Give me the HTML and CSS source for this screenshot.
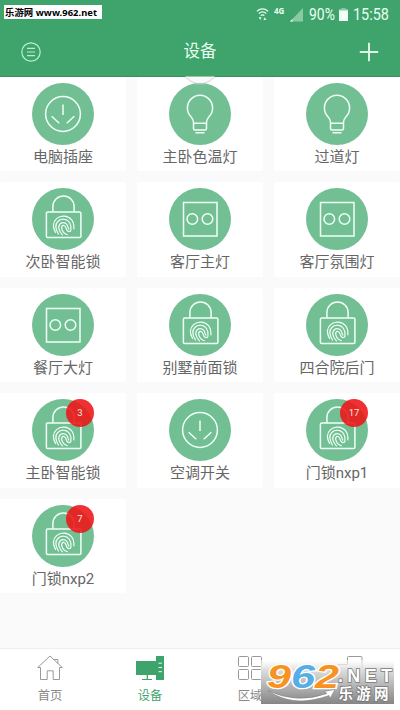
FILE: index.html
```html
<!DOCTYPE html>
<html lang="zh-CN">
<head>
<meta charset="utf-8">
<title>设备</title>
<link rel="stylesheet" href="styles.css">
</head>
<body>
<svg class="defs" aria-hidden="true">
  <symbol id="socket" viewBox="0 0 62 62">
    <circle cx="31" cy="31" r="17.4"/>
    <path d="M31 21.5v10.5M19.7 33.3l7.6 7M42.3 33.3l-7.6 7"/>
  </symbol>
  <symbol id="bulb" viewBox="0 0 62 62">
    <path d="M24.5 45.5v-6.200c0-2.400-1-3.900-2.700-5.800a12.600 12.600 0 1 1 18.400 0c-1.700 1.900-2.700 3.400-2.700 5.800v6.200a1.500 1.500 0 0 1-1.500 1.500h-10a1.500 1.500 0 0 1-1.500-1.500zM24.500 40.200h13M26.500 49.800h9"/>
  </symbol>
  <symbol id="switch" viewBox="0 0 62 62">
    <path d="M14.500 14.500h33.500v33.500h-33.500z"/>
    <circle cx="23.300" cy="31" r="5.300"/><circle cx="38.500" cy="31" r="5.300"/>
  </symbol>
  <symbol id="lock" viewBox="0 0 62 62">
    <rect x="14.400" y="24" width="34.500" height="25.500" rx="1.300"/>
    <path d="M20.900 24v-5.500a10.600 10.600 0 0 1 21.200 0v5.500"/>
    <path class="print" d="M23.600 44.500c-2.800-5-2.700-10.500 1-13.900 4.200-3.800 11.300-3.300 14.900 1.100 2.300 2.900 2.600 6 2.400 9.200M26.400 46c-2.500-4.300-3.400-9.600-.6-12.500 3.200-3.500 9.200-2.900 11.700 1 1.600 2.600 2 5.200 1.400 7.800-.4 1.500-2.300 1.600-3.500.5-1.800-1.600-.9-4.800-3.400-5.300-2-.3-2.700 1.400-2.200 3.400.7 2.900 2.600 4.900 5.500 5.800M30.400 46.900c-2.600-3-4.500-7.500-2.900-10.300 1.700-2.700 6-2.500 7.600.2 1 1.700.8 3.400 1.700 4.200"/>
  </symbol>
</svg>

<header class="header">
  <div class="statusbar">
    <span class="source">乐游网 www.962.net</span>
    <svg class="wifi" viewBox="0 0 14 15">
      <path d="M1 4.500q6-5 12 0M3 7q4-3.400 8 0M5 9.200q2-1.600 4 0"/>
      <path class="solid" d="M3 11h3l-1.500 3zM8 14h3l-1.500-3z"/>
    </svg>
    <span class="network">4G</span>
    <svg class="signal" viewBox="0 0 13 14"><path class="faint" d="M13 0v13.500H0z"/><path class="solid" d="M2.500 11v2.500H0z"/></svg>
    <span class="level">90%</span>
    <svg class="battery" viewBox="0 0 9 13"><path class="faint" d="M2.500 0h4v1H9v2H0V1h2.500z"/><path class="solid" d="M0 2.500h9V13H0z"/></svg>
    <span class="clock">15:58</span>
  </div>
  <div class="titlebar">
    <svg class="menu" viewBox="0 0 20 20"><circle cx="10" cy="10" r="9.200"/><path d="M6 6.300h8M6 10h8M6 13.700h8"/></svg>
    <h1>设备</h1>
    <svg class="add" viewBox="0 0 20 20"><path d="M10 .8v18.400M.8 10h18.400"/></svg>
  </div>
</header>

<main class="grid">
  <div class="card"><div class="disc"><svg><use href="#socket"/></svg></div><span>电脑插座</span></div>
  <div class="card spinner"><div class="disc"><svg><use href="#bulb"/></svg></div><span>主卧色温灯</span></div>
  <div class="card"><div class="disc"><svg><use href="#bulb"/></svg></div><span>过道灯</span></div>
  <div class="card"><div class="disc"><svg><use href="#lock"/></svg></div><span>次卧智能锁</span></div>
  <div class="card"><div class="disc"><svg><use href="#switch"/></svg></div><span>客厅主灯</span></div>
  <div class="card"><div class="disc"><svg><use href="#switch"/></svg></div><span>客厅氛围灯</span></div>
  <div class="card"><div class="disc"><svg><use href="#switch"/></svg></div><span>餐厅大灯</span></div>
  <div class="card"><div class="disc"><svg><use href="#lock"/></svg></div><span>别墅前面锁</span></div>
  <div class="card"><div class="disc"><svg><use href="#lock"/></svg></div><span>四合院后门</span></div>
  <div class="card"><div class="disc"><svg><use href="#lock"/></svg><b class="badge">3</b></div><span>主卧智能锁</span></div>
  <div class="card"><div class="disc"><svg><use href="#socket"/></svg></div><span>空调开关</span></div>
  <div class="card"><div class="disc"><svg><use href="#lock"/></svg><b class="badge">17</b></div><span>门锁nxp1</span></div>
  <div class="card"><div class="disc"><svg><use href="#lock"/></svg><b class="badge">7</b></div><span>门锁nxp2</span></div>
</main>

<nav class="tabs">
  <div class="tab"><svg viewBox="0 0 28 26"><path d="M4.500 12.500H1.700L14 1l12.300 11.500h-2.800v12h-6.300v-8.700h-6v8.700H4.500zM18 4.500h3.800v4"/></svg><span>首页</span></div>
  <div class="tab active"><svg viewBox="0 0 28 26"><path class="solid" d="M0 6h20V1h8v24h-8v-5h-8v4h4v1H6v-1h4.700v-4H0z"/><path class="slots" d="M22.500 8.200h3.500M22.500 12.500h3.500M22.500 16.700h3.500"/></svg><span>设备</span></div>
  <div class="tab"><svg viewBox="0 0 28 26"><rect x="2.500" y="1.500" width="10" height="10" rx="1"/><rect x="15.500" y="1.500" width="10" height="10" rx="1"/><rect x="2.500" y="14.500" width="10" height="10" rx="1"/><rect x="15.500" y="14.500" width="10" height="10" rx="1"/></svg><span>区域</span></div>
  <div class="tab"><svg viewBox="0 0 28 26"><path d="M2 23V9.500h9.500v-7q0-1 1-1h12.500q1 0 1 1V23"/></svg></div>
</nav>

<svg class="watermark" viewBox="0 0 133 44">
  <defs>
    <linearGradient id="shade" x1="0" y1="0" x2="0" y2="1"><stop offset="0" stop-color="#fff" stop-opacity=".5"/><stop offset=".22" stop-color="#dedede"/><stop offset=".6" stop-color="#b3b3b3"/><stop offset="1" stop-color="#858585"/></linearGradient>
  </defs>
  <rect width="133" height="44" fill="url(#shade)"/>
  <g class="digits">
    <text x="6" y="28" textLength="24" lengthAdjust="spacingAndGlyphs" fill="#f7931e">9</text>
    <text x="30" y="28" textLength="24" lengthAdjust="spacingAndGlyphs" fill="#55aee5">6</text>
    <text x="54" y="28" textLength="24" lengthAdjust="spacingAndGlyphs" fill="#f7931e">2</text>
  </g>
  <text class="net" x="77" y="21.500" textLength="54" lengthAdjust="spacing">.NET</text>
  <path d="M7 30.500q28 14 59 3l-3-2 11-2-5 9-1-3q-36 13-61-5z" fill="#fff" stroke="#777" stroke-width=".5"/>
  <text class="name" x="77.500" y="39" textLength="50">乐游网</text>
</svg>
</body>
</html>
```

FILE: styles.css
```css
* { box-sizing: border-box; }

body {
  margin: 0;
  width: 400px;
  height: 710px;
  overflow: hidden;
  position: relative;
  display: flex;
  flex-direction: column;
  background: #fafafa;
  font-family: Roboto, "Noto Sans CJK SC", sans-serif;
}

svg { fill: none; display: block; flex: none; }
.defs { position: absolute; width: 0; height: 0; }

.header {
  height: 76.500px;
  flex: none;
  background: #3fa36c;
  border-bottom: 1px solid #388f60;
  color: #e9fff2;
}

.statusbar {
  height: 29px;
  display: flex;
  align-items: center;
  padding: 0 11px 0 4px;
}
.source {
  width: 98px;
  height: 14px;
  margin: -5px auto 0 0;
  padding-left: 1px;
  background: #fff;
  color: #000;
  font: bold 9.400px/15px "Noto Sans", "Noto Sans CJK SC", sans-serif;
  letter-spacing: .05px;
  white-space: nowrap;
}
.solid { fill: #f2fff7; stroke: none; }
.faint { fill: #8bc9a5; }
.wifi { width: 13px; height: 14px; margin: -2px 5px 0 0; stroke: #e9fff2; stroke-width: 1.300; }
.network { font: bold 8px/10px "Open Sans", sans-serif; margin: -7px 5px 0 0; width: 11px; }
.signal { width: 13px; height: 14px; margin-right: 6px; }
.level, .clock { font-size: 16px; line-height: 29px; white-space: nowrap; transform-origin: left; }
.level { width: 30px; transform: scaleX(.87); }
.battery { width: 9px; height: 13px; }
.clock { width: 36px; margin-left: 5px; transform: scaleX(.9); }

.titlebar {
  height: 46px;
  display: flex;
  align-items: center;
  justify-content: space-between;
  padding: 0 21px;
}
.titlebar h1 { margin: 0; font-size: 16.500px; line-height: 46px; font-weight: 400; }
.menu { width: 20px; height: 20px; stroke: #b9edce; stroke-width: 1.200; }
.add { width: 20px; height: 20px; stroke: #e0f7e9; stroke-width: 1.900; }

.grid {
  height: 571.500px;
  flex: none;
  display: grid;
  grid-template-columns: repeat(3, 126px);
  grid-auto-rows: 94.500px;
  gap: 11px;
  align-content: start;
}
.card {
  position: relative;
  display: flex;
  flex-direction: column;
  align-items: center;
  padding-top: 6px;
  background: #fff;
  border-radius: 2px;
}
.card > span {
  font-size: 15px;
  line-height: 24px;
  color: #666;
}
.disc {
  position: relative;
  width: 62px;
  height: 62px;
  flex: none;
  border-radius: 50%;
  background: #72bf94;
}
.disc svg { width: 62px; height: 62px; stroke: #f0fff6; stroke-width: 1.500; }
.print { stroke-width: 1.200; stroke-linecap: round; }
.badge {
  position: absolute;
  top: 0;
  right: 0;
  width: 28px;
  height: 28px;
  border-radius: 50%;
  background: rgba(238, 22, 26, .89);
  color: #ffe3df;
  font-weight: 400;
  font-size: 9.500px;
  line-height: 28px;
  text-align: center;
}
.spinner::before {
  content: "";
  position: absolute;
  top: -30px;
  left: 45px;
  width: 36px;
  height: 36px;
  border-radius: 50%;
  background: #fafafa;
  box-shadow: 0 1px 2px #ccc;
  clip-path: inset(30px -3px -4px -3px);
  z-index: 1;
}

.tabs {
  height: 62px;
  flex: none;
  display: grid;
  grid-template-columns: repeat(4, 100px);
  background: #fff;
  border-top: 1px solid #eee;
}
.tab {
  display: flex;
  flex-direction: column;
  align-items: center;
  padding-top: 6px;
  color: #8a8a8a;
}
.tab svg { width: 28px; height: 26px; stroke: #999; stroke-width: 1; }
.tab span { margin-top: 6px; font-size: 12.300px; line-height: 18px; }
.tab.active { color: #3fa36c; }
.tab.active .solid { fill: #3fa36c; }
.tab .slots { stroke: #e5f6ec; }

.watermark {
  position: absolute;
  left: 261px;
  top: 660px;
  width: 133px;
  height: 44px;
}
.digits { font: italic bold 33px "Liberation Sans", sans-serif; stroke: #fff; stroke-width: 2.500; paint-order: stroke; }
.net, .name { fill: #fff; stroke: #777; stroke-width: 1.500; paint-order: stroke; }
.net { font: bold 18px "Liberation Sans", sans-serif; }
.name { font: bold 14.500px "Noto Sans CJK SC", sans-serif; }
```
